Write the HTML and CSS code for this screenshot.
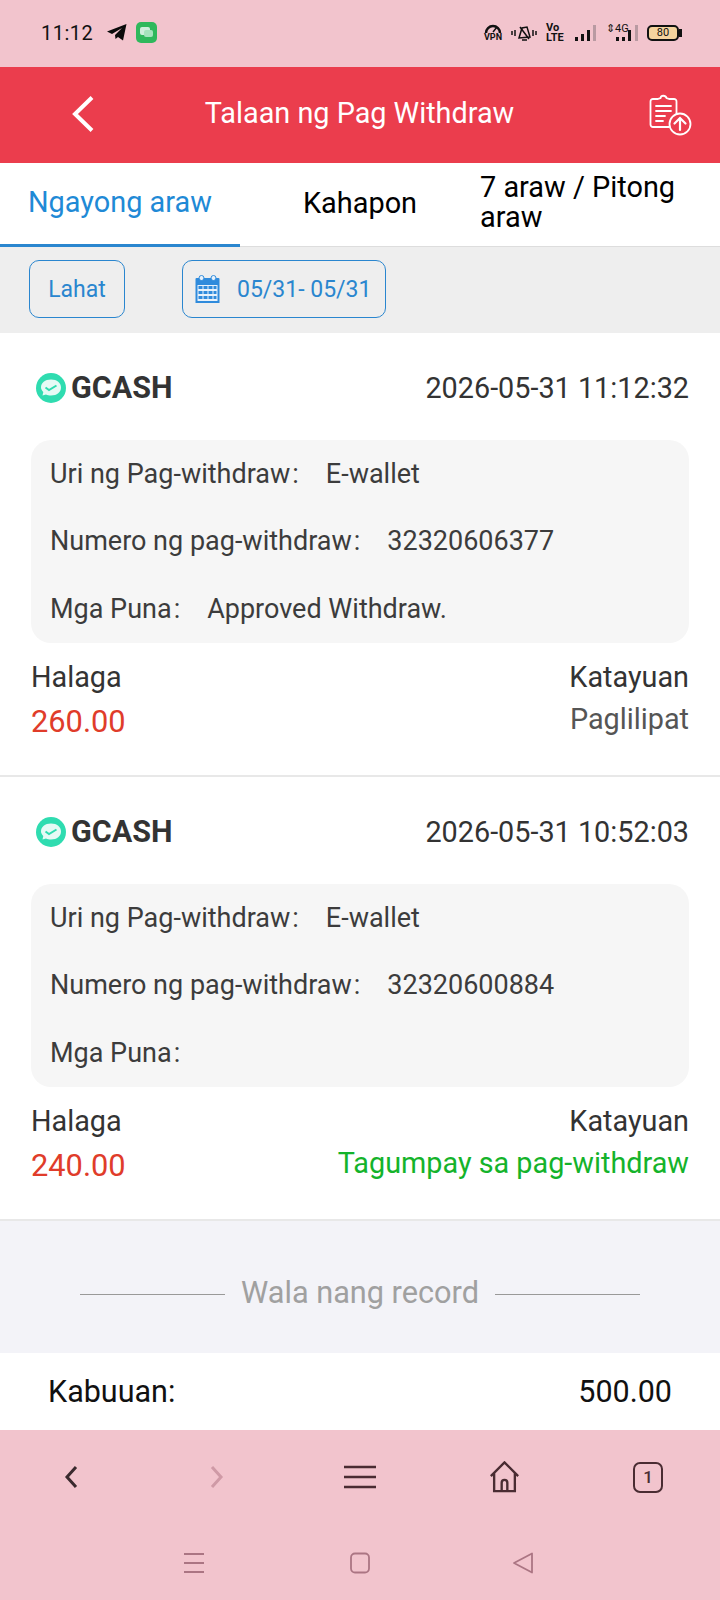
FILE: index.html
```html
<!DOCTYPE html>
<html lang="tl">
<head>
  <meta charset="UTF-8">
  <title>Talaan ng Pag Withdraw</title>
  <meta name="viewport" content="width=device-width, initial-scale=1">
  <link rel="stylesheet" href="styles.css">
</head>
<body>
  <div class="status-bar">
    <div class="status-left">
      <span class="time">11:12</span>
      <svg class="ic-telegram" width="20" height="17" viewBox="0 0 20 17"><path d="M0 7.500 19.500 0 16 16.500 11 13 8.500 15 8 11 15 4 5 10Z" fill="#0a0a0a"/></svg>
      <svg class="ic-msg" width="21" height="21" viewBox="0 0 21 21"><rect width="21" height="21" rx="5" fill="#2fb85c"/><rect x="4" y="5" width="10" height="8" rx="2" fill="#cfeedd"/><rect x="8" y="8" width="9" height="7" rx="2" fill="#a5e3bd"/></svg>
    </div>
    <div class="status-right">
      <span class="vpn">
        <svg width="18" height="9" viewBox="0 0 18 9"><path d="M2 9a7 7 0 0 1 14 0" fill="none" stroke="#111" stroke-width="2.500"/><path d="M9 8 13 3" stroke="#111" stroke-width="1.500"/></svg>
        <span>VPN</span>
      </span>
      <svg width="26" height="16" viewBox="0 0 26 16" fill="none" stroke="#111" stroke-width="1.500"><path d="M8 13 11 3 16 2 19 12Z"/><path d="M1 6v4M4 5v6M22 5v6M25 6v4M11 15h5M9 2 18 14"/></svg>
      <span class="volte">Vo<br>LTE</span>
      <svg width="22" height="16" viewBox="0 0 22 16"><path d="M0 12h3v4H0zM6 9h3v7H6zM12 5h3v11h-3z" fill="#111"/><path d="M18 0h3v16h-3z" fill="#b99aa2"/></svg>
      <span class="net">
        <span class="net-label">⇕4G</span>
        <svg width="32" height="16" viewBox="0 0 32 16"><path d="M10 12h3v4h-3zM16 12h3v4h-3zM22 5h3v11h-3z" fill="#111"/><path d="M29 0h3v16h-3z" fill="#b99aa2"/></svg>
      </span>
      <span class="battery"><span class="battery-level">80</span></span>
    </div>
  </div>

  <header class="top-bar">
    <svg class="back" width="24" height="38" viewBox="0 0 24 38"><path d="M20 2.500 3 19 20 35.500" fill="none" stroke="#fff" stroke-width="4"/></svg>
    <h1>Talaan ng Pag Withdraw</h1>
    <svg class="clip" width="44" height="44" viewBox="0 0 44 44" fill="none" stroke="#fff" stroke-width="1.800" stroke-linecap="round">
      <path d="M21 34H5a2.500 2.500 0 0 1-2.500-2.500V8.500A2.500 2.500 0 0 1 5 6h4.500l3-1c.5-3 5-3 6 0l3 1H26a2.500 2.500 0 0 1 2.500 2.500V20"/>
      <path d="M8 13h15M8 18h15M8 23h9M8 28h7"/>
      <circle cx="32" cy="31" r="10.500"/>
      <path d="M32 37V25.500M26.500 30.500l5.500-5.500 5.500 5.500" stroke-width="2.200"/>
    </svg>
  </header>

  <nav class="tabs">
    <a class="tab active">Ngayong araw</a>
    <a class="tab">Kahapon</a>
    <a class="tab tab-long">7 araw / Pitong araw</a>
  </nav>

  <div class="filters">
    <button class="chip chip-all">Lahat</button>
    <button class="chip chip-date">
      <svg width="27" height="30" viewBox="0 0 26 30"><path d="M2 4h22a1 1 0 0 1 1 1v24H1V5a1 1 0 0 1 1-1z" fill="#2f8bdc"/><rect x="3" y="11" width="20" height="16" fill="#e8f2fb"/><path d="M4 12h4v3H4zM9 12h4v3H9zM14 12h4v3h-4zM19 12h3v3h-3zM4 17h4v3H4zM9 17h4v3H9zM14 17h4v3h-4zM19 17h3v3h-3zM4 22h4v3H4zM9 22h4v3H9zM14 22h4v3h-4zM19 22h3v3h-3z" fill="#2f8bdc"/><circle cx="7" cy="4" r="2.500" fill="#e8f2fb" stroke="#2f8bdc"/><circle cx="19" cy="4" r="2.500" fill="#e8f2fb" stroke="#2f8bdc"/></svg>
      <span>05/31- 05/31</span>
    </button>
  </div>

  <section class="record">
    <div class="record-head">
      <div class="brand">
        <svg width="30" height="30" viewBox="0 0 30 30"><circle cx="15" cy="15" r="15" fill="#2fdcb0"/><path d="M15 6.500c6 0 10 3.500 10 8s-4 8-10 8c-2 0-3.500-.3-5-1l-3.500 1 .8-3.500C6 17.500 5 16 5 14.500c0-4.500 4-8 10-8z" fill="#e6faf5"/><path d="M9.500 14.500 13 17 20.500 12.500" fill="none" stroke="#2fdcb0" stroke-width="2"/></svg>
        <span>GCASH</span>
      </div>
      <time>2026-05-31 11:12:32</time>
    </div>
    <div class="details">
      <div class="row"><span class="label">Uri ng Pag-withdraw<span class="colon">:</span></span><span>E-wallet</span></div>
      <div class="row"><span class="label">Numero ng pag-withdraw<span class="colon">:</span></span><span>32320606377</span></div>
      <div class="row"><span class="label">Mga Puna<span class="colon">:</span></span><span>Approved Withdraw.</span></div>
    </div>
    <div class="summary">
      <div>
        <p class="caption">Halaga</p>
        <p class="amount">260.00</p>
      </div>
      <div class="summary-right">
        <p class="caption">Katayuan</p>
        <p class="state">Paglilipat</p>
      </div>
    </div>
  </section>

  <section class="record">
    <div class="record-head">
      <div class="brand">
        <svg width="30" height="30" viewBox="0 0 30 30"><circle cx="15" cy="15" r="15" fill="#2fdcb0"/><path d="M15 6.500c6 0 10 3.500 10 8s-4 8-10 8c-2 0-3.500-.3-5-1l-3.500 1 .8-3.500C6 17.500 5 16 5 14.500c0-4.500 4-8 10-8z" fill="#e6faf5"/><path d="M9.500 14.500 13 17 20.500 12.500" fill="none" stroke="#2fdcb0" stroke-width="2"/></svg>
        <span>GCASH</span>
      </div>
      <time>2026-05-31 10:52:03</time>
    </div>
    <div class="details">
      <div class="row"><span class="label">Uri ng Pag-withdraw<span class="colon">:</span></span><span>E-wallet</span></div>
      <div class="row"><span class="label">Numero ng pag-withdraw<span class="colon">:</span></span><span>32320600884</span></div>
      <div class="row"><span class="label">Mga Puna<span class="colon">:</span></span></div>
    </div>
    <div class="summary">
      <div>
        <p class="caption">Halaga</p>
        <p class="amount">240.00</p>
      </div>
      <div class="summary-right">
        <p class="caption">Katayuan</p>
        <p class="state success">Tagumpay sa pag-withdraw</p>
      </div>
    </div>
  </section>

  <div class="no-more"><span>Wala nang record</span></div>

  <div class="total">
    <span>Kabuuan:</span>
    <span>500.00</span>
  </div>

  <div class="browser-bar">
    <svg width="20" height="26" viewBox="0 0 20 26"><path d="M14 3 5 13 14 23" fill="none" stroke="#3a2a2e" stroke-width="3"/></svg>
    <svg width="20" height="26" viewBox="0 0 20 26"><path d="M6 3 15 13 6 23" fill="none" stroke="#cf9aa6" stroke-width="3"/></svg>
    <svg width="32" height="24" viewBox="0 0 32 24"><path d="M0 2h32M0 12h32M0 22h32" stroke="#4a2c32" stroke-width="2.500"/></svg>
    <svg width="31" height="32" viewBox="0 0 32 34" fill="none" stroke="#4a2c32" stroke-width="2.500"><path d="M1.500 16 16 1.500 30.500 16M5 13v19h22V13M13 32V23a3 3 0 0 1 6 0v9"/></svg>
    <span class="tab-count">1</span>
  </div>

  <div class="system-nav">
    <svg width="22" height="22" viewBox="0 0 22 22"><path d="M1 2h20M1 11h20M1 20h20" stroke="#ab7583" stroke-width="1.800"/></svg>
    <svg class="nav-square" width="22" height="22" viewBox="0 0 22 22"><rect x="2" y="1.500" width="18" height="19" rx="4" fill="none" stroke="#ab7583" stroke-width="1.800"/></svg>
    <svg width="22" height="22" viewBox="0 0 22 22"><path d="M20 1.500V20.500L2 11Z" fill="none" stroke="#ab7583" stroke-width="1.800" stroke-linejoin="round"/></svg>
  </div>
</body>
</html>
```

FILE: styles.css
```css
* {
  box-sizing: border-box;
}

body {
  margin: 0;
  width: 720px;
  height: 1600px;
  overflow: hidden;
  font-family: Roboto, "Liberation Sans", sans-serif;
  color: #333;
  background: #fff;
}

p {
  margin: 0;
}

.status-bar {
  height: 67px;
  padding: 0 41px 2px 41px;
  display: flex;
  justify-content: space-between;
  align-items: center;
  background: #f2c4cd;
  color: #111;
}

.status-left,
.status-right {
  display: flex;
  align-items: center;
}

.status-left {
  gap: 14px;
}

.status-right {
  gap: 9px;
}

.time {
  font-size: 20px;
  letter-spacing: 0.5px;
}

.ic-msg {
  margin-left: -5px;
}

.vpn {
  width: 18px;
  display: flex;
  flex-direction: column;
  align-items: center;
  font-size: 9px;
  line-height: 9px;
  font-weight: 700;
}

.volte {
  width: 20px;
  font-size: 11px;
  line-height: 10px;
  font-weight: 700;
}

.net {
  position: relative;
  width: 32px;
  height: 16px;
  display: flex;
}

.net-label {
  position: absolute;
  left: 0;
  top: -2px;
  font-size: 11px;
  line-height: 12px;
  white-space: nowrap;
}

.battery {
  width: 32px;
  height: 16px;
  border: 2px solid #111;
  border-radius: 5px;
  background: #f5d49e;
  display: flex;
  align-items: center;
  justify-content: center;
  position: relative;
}

.battery::after {
  content: "";
  position: absolute;
  right: -5px;
  top: 2px;
  width: 3px;
  height: 8px;
  background: #111;
}

.battery-level {
  font-size: 11px;
}

.top-bar {
  height: 96px;
  padding: 0 28px 0 72px;
  display: flex;
  align-items: center;
  background: #eb3d4d;
}

.back {
  margin-bottom: 2px;
}

.top-bar h1 {
  flex: 1;
  margin: 0 0 5px;
  text-align: center;
  padding-right: 25px;
  font-size: 28.800px;
  font-weight: 400;
  color: #fff;
}

.tabs {
  height: 84px;
  display: flex;
  border-bottom: 1px solid #ddd;
}

.tab {
  width: 240px;
  padding-bottom: 4px;
  display: flex;
  align-items: center;
  justify-content: center;
  font-size: 28.900px;
  color: #000;
}

.tab.active {
  color: #1f8ad6;
  border-bottom: 3px solid #2a86cf;
  height: 84px;
}

.tab-long {
  justify-content: flex-start;
  line-height: 29.500px;
}

.filters {
  height: 86px;
  padding: 13px 29px;
  display: flex;
  gap: 57px;
  background: #eeeeee;
}

.chip {
  height: 58px;
  border: 1px solid #2a86cf;
  border-radius: 10px;
  background: transparent;
  color: #2a86cf;
  font: inherit;
  font-size: 23px;
  display: flex;
  align-items: center;
}

.chip-all {
  width: 96px;
  padding: 0;
  justify-content: center;
}

.chip-date {
  width: 204px;
  padding: 0 0 0 11px;
  gap: 16px;
}

.record {
  height: 444px;
  padding: 34px 31px 0;
  border-bottom: 2px solid #e8e8e8;
}

.record-head {
  height: 41px;
  display: flex;
  justify-content: space-between;
  align-items: center;
  padding-left: 5px;
  font-size: 28.800px;
}

.brand {
  display: flex;
  align-items: center;
  gap: 5px;
  font-size: 30.500px;
  font-weight: 700;
}

.details {
  margin-top: 32px;
  height: 203px;
  padding: 0 19px;
  display: flex;
  flex-direction: column;
  justify-content: space-around;
  border-radius: 20px;
  background: #f6f6f6;
  font-size: 27px;
  color: #3c3c3c;
}

.row {
  display: flex;
  gap: 27px;
}

.colon {
  margin-left: 2px;
}

.summary {
  margin-top: 16px;
  display: flex;
  justify-content: space-between;
  font-size: 28.800px;
}

.summary-right {
  text-align: right;
}

.caption {
  line-height: 36px;
}

.amount {
  margin-top: 5px;
  line-height: 44px;
  font-size: 30.800px;
  color: #e03c2a;
}

.state {
  margin-top: 4px;
  line-height: 40px;
  color: #555;
}

.state.success {
  color: #14b32b;
}

.no-more {
  height: 132px;
  padding: 10px 80px 0;
  display: flex;
  align-items: center;
  gap: 16px;
  background: #f3f3f8;
  font-size: 30.700px;
  color: #a0a0a0;
}

.no-more::before,
.no-more::after {
  content: "";
  flex: 1;
  height: 1px;
  margin-top: 4px;
  background: #999;
}

.total {
  height: 77px;
  padding: 0 48px;
  display: flex;
  justify-content: space-between;
  align-items: center;
  font-size: 30.500px;
  color: #111;
}

.browser-bar {
  height: 96px;
  padding-bottom: 2px;
  display: grid;
  grid-template-columns: repeat(5, 1fr);
  justify-items: center;
  align-items: center;
  background: #f2c4cd;
}

.tab-count {
  width: 30px;
  height: 31px;
  border: 2.500px solid #4a2c32;
  border-radius: 7px;
  display: flex;
  align-items: center;
  justify-content: center;
  font-size: 17px;
  font-weight: 500;
  color: #4a2c32;
}

.system-nav {
  height: 74px;
  padding: 26px 186px 0 183px;
  display: flex;
  justify-content: space-between;
  align-items: flex-start;
  background: #f2c4cd;
}

.nav-square {
  margin-left: 3px;
}
```
